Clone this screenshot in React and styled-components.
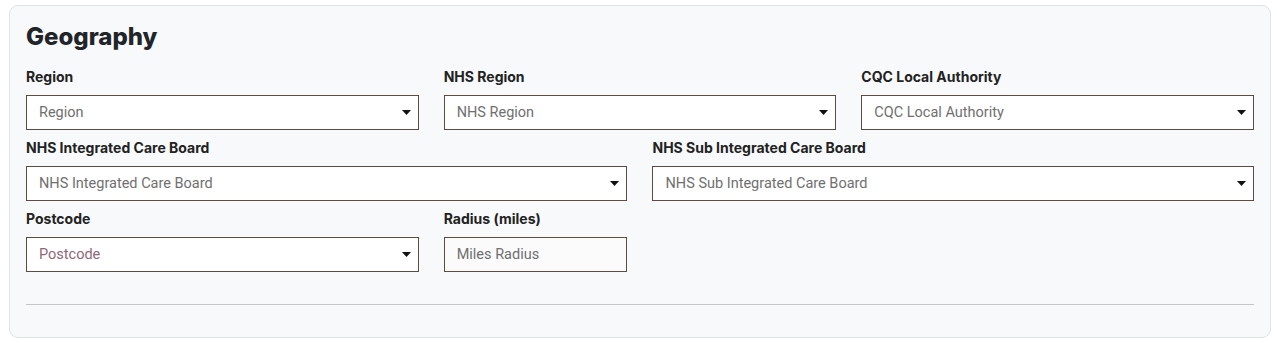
import styled, { createGlobalStyle } from "styled-components";

const GlobalStyle = createGlobalStyle`
  body {
    margin: 0;
    background: #ffffff;
    font-family: Inter, Roboto, "Liberation Sans", sans-serif;
  }
`;

// ------------------------------------------------
// - Campos del formulario de geografía
// ------------------------------------------------
const campos = [
  { label: "Region", placeholder: "Region", span: 2, select: true },
  { label: "NHS Region", placeholder: "NHS Region", span: 2, select: true },
  {
    label: "CQC Local Authority",
    placeholder: "CQC Local Authority",
    span: 2,
    select: true,
  },
  {
    label: "NHS Integrated Care Board",
    placeholder: "NHS Integrated Care Board",
    span: 3,
    select: true,
  },
  {
    label: "NHS Sub Integrated Care Board",
    placeholder: "NHS Sub Integrated Care Board",
    span: 3,
    select: true,
  },
  {
    label: "Postcode",
    placeholder: "Postcode",
    span: 2,
    select: true,
    tinted: true,
  },
  { label: "Radius (miles)", placeholder: "Miles Radius", span: 1 },
];

const Flecha = () => (
  <svg width="9" height="5" viewBox="0 0 9 5">
    <path d="M0 0 L9 0 L4.5 5 Z" fill="#111" />
  </svg>
);

const App = () => {
  return (
    <>
      <GlobalStyle />
      <Pagina>
        <Tarjeta>
          <Titulo>Geography</Titulo>
          <Rejilla>
            {campos.map((campo) => (
              <Campo key={campo.label} $span={campo.span}>
                <Etiqueta>{campo.label}</Etiqueta>
                <Caja $tinted={campo.tinted} $select={campo.select}>
                  <span>{campo.placeholder}</span>
                  {campo.select && <Flecha />}
                </Caja>
              </Campo>
            ))}
          </Rejilla>
          <Separador />
        </Tarjeta>
      </Pagina>
    </>
  );
};

export default App;

// ---------------------
// - Styled Components -
// ---------------------
const Pagina = styled.div`
  padding: 5px 6px 5px 9px;
`;

const Tarjeta = styled.div`
  height: 333px;
  box-sizing: border-box;
  background: #f8f9fa;
  border: 1px solid #dfe2e6;
  border-radius: 9px;
  padding: 16px 16px 0 16px;
`;

const Titulo = styled.h2`
  margin: 0 0 15px 0;
  font-size: 24px;
  line-height: 29px;
  font-weight: 800;
  color: #212529;
`;

const Rejilla = styled.div`
  display: grid;
  grid-template-columns: repeat(6, 1fr);
  column-gap: 25px;
  row-gap: 7px;
`;

const Campo = styled.div`
  grid-column: span ${(p) => p.$span};
  display: flex;
  flex-direction: column;
`;

const Etiqueta = styled.label`
  font-size: 14px;
  line-height: 21px;
  font-weight: 700;
  color: #222;
  margin-bottom: 8px;
`;

const Caja = styled.div`
  height: 35px;
  box-sizing: border-box;
  display: flex;
  align-items: center;
  justify-content: space-between;
  padding: 0 7px 0 12px;
  background: ${(p) => (p.$select ? "#ffffff" : "#fbfbfc")};
  border: 1px solid #5d4b3f;
  font-family: Roboto, "Liberation Sans", sans-serif;
  font-size: 14.5px;
  color: ${(p) => (p.$tinted ? "#8d6877" : "#6f6f6f")};
`;

const Separador = styled.hr`
  margin: 32px 0 0 0;
  border: none;
  border-top: 1px solid #c6c6c6;
`;
